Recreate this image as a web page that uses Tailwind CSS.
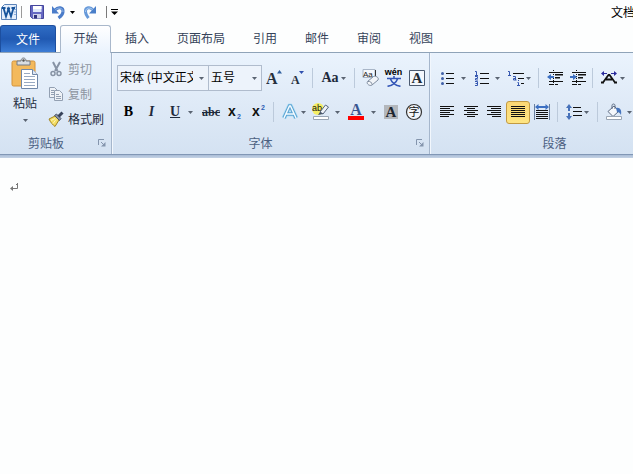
<!DOCTYPE html>
<html lang="zh-CN">
<head>
    <meta charset="UTF-8">
    <meta name="viewport" content="width=device-width, initial-scale=1.0">
    <title>文档 - Word</title>
    <script src="https://cdn.jsdelivr.net/npm/@tailwindcss/browser@4"></script>
    <style>
        body { font-family: 'Noto Sans CJK SC', sans-serif; }
    </style>
</head>
<body class="min-h-screen flex flex-col overflow-hidden bg-[#fdfefe] text-xs text-[#1e2a3c]">
    <!-- Shared shapes -->
    <svg class="hidden">
        <symbol id="arrow" viewBox="0 0 5 3"><path d="M0 0h5L2.5 3z" fill="#5a6472"/></symbol>
        <symbol id="launcher" viewBox="0 0 8 8">
            <path d="M.5 6V.5H6" fill="none" stroke="#8495ad"/>
            <path d="M3 3l3 3" stroke="#8495ad"/><path d="M7.500 3v4.500H3z" fill="#8495ad"/>
        </symbol>
    </svg>

    <!-- Title bar -->
    <header class="h-6 flex items-center shrink-0 pl-px whitespace-nowrap">
        <button aria-label="Word" class="w-4 h-4">
            <svg viewBox="0 0 16 16" class="w-4 h-4">
                <path d="M3.500.5h12v15H.5v-12z" fill="#e4eefb" stroke="#5b83b8"/>
                <path d="M13 3h2M13 5.500h2M13 8h2M13 10.500h2" stroke="#8fb2dd"/>
                <path d="M2.500 4L5 12.500 7.500 5 10 12.500 12.500 4M1 4h3.500M10.500 4H14M6 4.500h3" fill="none" stroke="#17549b" stroke-width="1.800"/>
            </svg>
        </button>
        <span class="w-px h-3 ml-1 mr-[7px] bg-[#9a9a9a]"></span>
        <button aria-label="保存" class="w-4 h-4">
            <svg viewBox="0 0 16 16" class="w-4 h-4">
                <path d="M1.500 1.500h13v13h-11l-2-2z" fill="#6568c2" stroke="#44469c"/>
                <path d="M4 2h8.500v6H4z" fill="#dfe8f9"/><path d="M4 2h8.500v3H4z" fill="#fff"/>
                <path d="M4 10h8v4.500H4z" fill="#cfd2ea"/><path d="M5 11h3v3.500H5z" fill="#30327d"/>
            </svg>
        </button>
        <button aria-label="撤消" class="ml-1.5 flex items-center gap-1">
            <svg viewBox="0 0 15 16" class="w-[15px] h-4">
                <path d="M4 6C7 2.500 12.500 3 12 8c-.3 3-2.500 4.500-4.500 6" fill="none" stroke="#4a7cc9" stroke-width="3"/>
                <path d="M4 6C7 3 12 3.500 12 8" fill="none" stroke="#8fb5e8"/>
                <path d="M1 2v7.500h7z" fill="#4a7cc9"/>
            </svg>
            <svg class="w-[5px] h-[3px] brightness-0"><use href="#arrow"/></svg>
        </button>
        <button aria-label="恢复" class="ml-2">
            <svg viewBox="0 0 15 16" class="block w-[15px] h-4">
                <path d="M10 6C7.500 2.500 2 3 2.500 8c.3 3 1.500 4 3 6" fill="none" stroke="#6699d9" stroke-width="3"/>
                <path d="M10 6C7.500 3 2.500 3.500 2.500 8" fill="none" stroke="#a9cbf2"/>
                <path d="M13 2v7.500H6z" fill="#4a7fc9"/>
            </svg>
        </button>
        <span class="w-px h-3 ml-2 mr-1 bg-[#7a7a7a]"></span>
        <button aria-label="自定义快速访问工具栏">
            <svg viewBox="0 0 7 6" class="block w-[7px] h-1.5"><path d="M0 0h7v1H0zM0 2.500h7L3.500 6z" fill="#000"/></svg>
        </button>
        <h1 class="ml-auto w-[22px] overflow-hidden text-black">文档</h1>
    </header>

    <!-- Tabs -->
    <nav class="h-[29px] flex items-end shrink-0 whitespace-nowrap border-b border-[#8fa3b8] text-[#35435a]">
        <button class="w-14 h-[27px] mr-1 pb-px rounded-t-[3px] border border-b-0 border-[#1d4f9f] bg-linear-to-b from-[#2f6cc4] via-[#2059b2] to-[#3c7dd6] text-white">文件</button>
        <button class="w-[51px] h-7 -mb-px pb-[3px] rounded-t-[3px] border border-b-0 border-[#a9b8cb] bg-linear-to-b from-white to-[#eaf3fd]">开始</button>
        <button class="h-[27px] px-3.5 pb-px">插入</button>
        <button class="h-[27px] px-3.5 pb-px">页面布局</button>
        <button class="h-[27px] px-3.5 pb-px">引用</button>
        <button class="h-[27px] px-3.5 pb-px">邮件</button>
        <button class="h-[27px] px-3.5 pb-px">审阅</button>
        <button class="h-[27px] px-3.5 pb-px">视图</button>
    </nav>

    <!-- Ribbon -->
    <div class="flex shrink-0 overflow-hidden whitespace-nowrap bg-linear-to-b from-[#eaf3fd] via-[#dfeaf7] to-[#d4e2f2] border-b border-[#8197b5]">
        <!-- Clipboard -->
        <section class="w-28 shrink-0 flex flex-col justify-between border-r border-[#a5b6cc] pt-[3px]">
            <div class="flex">
                <button class="w-12 flex flex-col items-center pt-px pl-0.5">
                    <svg viewBox="0 0 28 32" class="w-7 h-8">
                        <rect x="1" y="4" width="23" height="25" rx="1.500" fill="#f3b95c" stroke="#d3923a"/>
                        <path d="M6 8V4h4c0-4 5-4 5 0h4v4z" fill="#d9dde2" stroke="#727b86"/>
                        <circle cx="12.500" cy="3.500" r="1.200" fill="#555"/>
                        <path d="M10.500 12.500h11l5 5v14h-16z" fill="#fff" stroke="#7087a8"/>
                        <path d="M21.500 12.500v5h5" fill="#dfe8f4" stroke="#7087a8"/>
                        <path d="M13 16.500h6M13 19.500h11M13 22.500h11M13 25.500h11M13 28.500h11" stroke="#98a9c2"/>
                    </svg>
                    <span class="mt-1.5">粘贴</span>
                    <svg class="mt-2 w-[5px] h-[3px]"><use href="#arrow"/></svg>
                </button>
                <div class="flex flex-col">
                    <button class="h-[25px] flex items-center gap-1 text-[#8d959f]">
                        <svg viewBox="0 0 16 16" class="w-4 h-4" fill="none" stroke="#8793a5">
                            <path d="M5 1l4.500 9M12 1L7 10" stroke-width="2"/><circle cx="5" cy="12.500" r="2" stroke-width="1.500"/><circle cx="11" cy="12.500" r="2" stroke-width="1.500"/>
                        </svg>剪切
                    </button>
                    <button class="h-[25px] flex items-center gap-1 text-[#8d959f]">
                        <svg viewBox="0 0 16 16" class="w-4 h-4" fill="#eef2f7" stroke="#93a0b2">
                            <path d="M1.500 1.500h5l3 3v7h-8z"/><path d="M3 4.500h3M3 6.500h3M3 8.500h3"/>
                            <path d="M6.500 4.500h5l3 3v7h-8z"/><path d="M8 8.500h3M8 10.500h5M8 12.500h5"/>
                        </svg>复制
                    </button>
                    <button class="h-[25px] flex items-center gap-1">
                        <svg viewBox="0 0 16 16" class="w-4 h-4">
                            <path d="M1 8l6-3 4 4-4 6.500C5 14 2.500 11.500 1 8z" fill="#f3dc62" stroke="#a18424"/>
                            <path d="M3 9.500l4-2M5 12.500l3-4" stroke="#fdf5b5"/>
                            <path d="M6.500 4.500l2-1.500 4.500 4.500-1.500 2z" fill="#8a93a3" stroke="#4b566b"/>
                            <path d="M10.500 5.500L14.500 1.500" stroke="#37425a" stroke-width="3"/>
                        </svg>格式刷
                    </button>
                </div>
            </div>
            <div class="h-[22px] flex items-center pr-[5px]">
                <h2 class="grow pr-1.5 text-center text-[#4b6081]">剪贴板</h2>
                <button aria-label="剪贴板选项"><svg class="block w-2 h-2"><use href="#launcher"/></svg></button>
            </div>
        </section>

        <!-- Font -->
        <section class="w-[318px] shrink-0 flex flex-col border-l border-r border-l-[#f2f7fd] border-r-[#a5b6cc] pt-3 pl-1">
            <div class="h-[26px] flex items-center">
                <label class="relative w-[92px] h-[26px] flex items-center border border-[#b0bccd] bg-[#edf3fb]">
                    <select aria-label="字体" class="w-[75px] h-6 pl-0.5 pb-0.5 appearance-none overflow-hidden text-clip text-black outline-none"><option>宋体 (中文正文)</option></select>
                    <svg class="absolute right-1 w-[5px] h-[3px] pointer-events-none"><use href="#arrow"/></svg>
                </label>
                <label class="relative w-[54px] h-[26px] -ml-px flex items-center border border-[#b0bccd] bg-[#edf3fb]">
                    <select aria-label="字号" class="w-10 h-6 pl-0.5 pb-0.5 appearance-none text-black outline-none"><option>五号</option></select>
                    <svg class="absolute right-1 w-[5px] h-[3px] pointer-events-none"><use href="#arrow"/></svg>
                </label>
                <button aria-label="增大字体" class="w-6 flex justify-center">
                    <svg viewBox="0 0 16 16" class="w-4 h-4"><text x="0" y="14" font-family="Liberation Serif" font-weight="bold" font-size="16" fill="#26303d">A</text><path d="M11 3.500h5L13.500 0z" fill="#2f5f9e"/></svg>
                </button>
                <button aria-label="缩小字体" class="w-[23px] flex justify-center">
                    <svg viewBox="0 0 16 16" class="w-4 h-4"><text x="1" y="14" font-family="Liberation Serif" font-weight="bold" font-size="12" fill="#26303d">A</text><path d="M9 1h5l-2.500 3z" fill="#2f4fae"/></svg>
                </button>
                <span class="w-px h-5 ml-[3px] mr-1 bg-[#bccadb]"></span>
                <button aria-label="更改大小写" class="w-[33px] flex items-center justify-center gap-0.5 font-['Liberation_Serif'] font-bold text-sm">Aa<svg class="w-[5px] h-[3px]"><use href="#arrow"/></svg></button>
                <span class="w-px h-5 mx-1 bg-[#bccadb]"></span>
                <button aria-label="清除格式" class="w-[23px] flex justify-center">
                    <svg viewBox="0 0 18 18" class="w-[18px] h-[18px]">
                        <path d="M1 .5h12v8H1z" fill="#f5f8fc" stroke="#a9b6c8"/>
                        <text x="1" y="8" font-family="Liberation Sans" font-size="8" fill="#222">Aa</text>
                        <path d="M13.500 1v6" stroke="#333"/>
                        <path d="M5.500 12.500l6-5c2-1 6 1 4.500 3.500l-6 5c-2 1.500-6-1-4.500-3.500z" fill="#f1f4f8" stroke="#7f8c9f"/>
                        <path d="M6 12.500c2-.5 4 1 4 3" fill="none" stroke="#7f8c9f"/>
                    </svg>
                </button>
                <button aria-label="拼音指南" class="w-[23px] h-[18px] flex flex-col items-center text-[#3557b7]">
                    <span class="h-1.5 leading-[6px] text-[9px] font-bold text-black font-['Liberation_Sans']">wén</span>
                    <svg viewBox="0 0 14 11" class="w-3.5 h-[11px] mt-px" fill="none" stroke="currentColor" stroke-width="1.600"><path d="M0 2.500h14M7 0v2.500M3.500 3C5 7 8.500 9.500 13.500 10.300M10.500 3C9 7 5.500 9.500.5 10.300"/></svg>
                </button>
                <button aria-label="字符边框" class="w-[23px] flex justify-center">
                    <svg viewBox="0 0 16 16" class="w-4 h-4"><path d="M.5.5h15v15H.5z" fill="#f3f7fc" stroke="#4b5a70"/><text x="8" y="13" font-family="Liberation Serif" font-weight="bold" font-size="15" text-anchor="middle" fill="#222b36">A</text></svg>
                </button>
            </div>
            <div class="h-6 mt-[9px] flex items-center">
                <button class="w-[23px] font-['Liberation_Serif'] font-black text-sm text-black">B</button>
                <button class="w-[23px] font-['Liberation_Serif'] font-bold italic text-sm">I</button>
                <button aria-label="下划线" class="w-9 flex items-center pl-[7px] gap-2 font-['Liberation_Serif'] font-bold text-sm"><span class="underline">U</span><svg class="w-[5px] h-[3px]"><use href="#arrow"/></svg></button>
                <button class="w-6 font-['Liberation_Serif'] font-bold text-xs line-through">abc</button>
                <button aria-label="下标" class="w-6 flex justify-center">
                    <svg viewBox="0 0 14 16" class="w-3.5 h-4"><text x="0" y="12" font-family="Liberation Sans" font-weight="bold" font-size="14" fill="#111">x</text><text x="9" y="15" font-family="Liberation Sans" font-weight="bold" font-size="7" fill="#2f5fb5">2</text></svg>
                </button>
                <button aria-label="上标" class="w-[23px] flex justify-center">
                    <svg viewBox="0 0 14 16" class="w-3.5 h-4"><text x="0" y="12" font-family="Liberation Sans" font-weight="bold" font-size="14" fill="#111">x</text><text x="9" y="6" font-family="Liberation Sans" font-weight="bold" font-size="7" fill="#2f5fb5">2</text></svg>
                </button>
                <span class="w-px h-5 mx-[3px] bg-[#bccadb]"></span>
                <button aria-label="文本效果" class="w-8 flex items-center justify-center gap-0.5">
                    <svg viewBox="0 0 18 18" class="w-[18px] h-[18px]"><path d="M3 15L8.500 3h1L15 15M5 11h8" fill="none" stroke="#b5e0f6" stroke-width="5" stroke-linejoin="round"/><path d="M3 15L8.500 3h1L15 15M5 11h8" fill="none" stroke="#5ba3d3" stroke-width="3.500"/><path d="M3 15L8.500 3h1L15 15M5 11h8" fill="none" stroke="#f4fbff" stroke-width="1.500"/></svg>
                    <svg class="w-[5px] h-[3px]"><use href="#arrow"/></svg>
                </button>
                <button aria-label="突出显示" class="w-[34px] flex items-center justify-center gap-[5px]">
                    <svg viewBox="0 0 18 18" class="w-[18px] h-[18px]">
                        <circle cx="6" cy="6" r="6" fill="#f5ee63"/>
                        <text x="0" y="8" font-family="Liberation Sans" font-size="9" fill="#111">ab</text>
                        <path d="M8 9l5.500-7 3 2-5.500 7z" fill="#eef2f8" stroke="#56657c"/><path d="M6 12l2-3 3 2z" fill="#43506a"/>
                        <path d="M1.500 13.500h15v3h-15z" fill="#fff" stroke="#9aa6b5"/>
                    </svg>
                    <svg class="w-[5px] h-[3px]"><use href="#arrow"/></svg>
                </button>
                <button aria-label="字体颜色" class="w-9 flex items-center justify-center gap-1.5">
                    <svg viewBox="0 0 18 18" class="w-[18px] h-[18px]"><text x="9" y="12" font-family="Liberation Serif" font-weight="bold" font-size="16" text-anchor="middle" fill="#3a5591">A</text><path d="M1 13h16v4H1z" fill="#f00"/></svg>
                    <svg class="w-[5px] h-[3px]"><use href="#arrow"/></svg>
                </button>
                <button aria-label="字符底纹" class="w-[23px] flex justify-center">
                    <svg viewBox="0 0 14 14" class="w-3.5 h-3.5"><path d="M0 0h14v14H0z" fill="#b3b7bc"/><text x="7" y="12" font-family="Liberation Serif" font-weight="bold" font-size="15" text-anchor="middle" fill="#1d252f">A</text></svg>
                </button>
                <button aria-label="带圈字符" class="w-[23px] flex justify-center">
                    <svg viewBox="0 0 18 18" class="w-[18px] h-[18px]"><circle cx="9" cy="9" r="7.500" fill="#f2f6fb" stroke="#333" stroke-width="1.200"/><text x="9" y="13" font-family="Noto Sans CJK SC" font-size="11" text-anchor="middle" fill="#111">字</text></svg>
                </button>
            </div>
            <div class="h-[22px] mt-2 flex items-center pr-[5px]">
                <h2 class="grow pr-3 text-center text-[#4b6081]">字体</h2>
                <button aria-label="字体选项"><svg class="block w-2 h-2"><use href="#launcher"/></svg></button>
            </div>
        </section>

        <!-- Paragraph -->
        <section class="w-[250px] shrink-0 flex flex-col border-l border-[#f2f7fd] pt-3 pl-1">
            <div class="h-[26px] flex items-center">
                <button aria-label="项目符号" class="w-[35px] flex items-center justify-center gap-1.5">
                    <svg viewBox="0 0 15 16" class="w-[15px] h-4"><path d="M6 3.500h8M6 8.500h8M6 13.500h8" stroke="#111"/><g fill="#4060a8"><circle cx="2.500" cy="3.500" r="1.500"/><circle cx="2.500" cy="8.500" r="1.500"/><circle cx="2.500" cy="13.500" r="1.500"/></g></svg>
                    <svg class="w-[5px] h-[3px]"><use href="#arrow"/></svg>
                </button>
                <button aria-label="编号" class="w-[34px] flex items-center justify-center gap-1.5">
                    <svg viewBox="0 0 15 16" class="w-[15px] h-4"><path d="M6 3.500h9M6 8.500h9M6 13.500h9" stroke="#111"/><path d="M1 1.500h1.500V5M1 5.500h3M1 6.500h2.500v2H1.500V10H4M1 11.500h2.500v4H1M1.500 13.500h2" fill="none" stroke="#3557b0"/></svg>
                    <svg class="w-[5px] h-[3px]"><use href="#arrow"/></svg>
                </button>
                <button aria-label="多级列表" class="w-[30px] flex items-center justify-center gap-px">
                    <svg viewBox="0 0 17 16" class="w-[17px] h-4"><path d="M5 3.500h11M10 8.500h6M13 13.500h3" stroke="#111"/><path d="M0 1.500h1.500V5M0 5.500h3M5 6.500h2.500V10M7.500 8.500h-2v1.500h3M9.500 12.500h1V15M9 15.500h3M10 10.500h1" fill="none" stroke="#3557b0"/></svg>
                    <svg class="w-[5px] h-[3px]"><use href="#arrow"/></svg>
                </button>
                <span class="w-px h-5 mx-1 bg-[#bccadb]"></span>
                <button aria-label="减少缩进量" class="w-[23px] flex justify-center">
                    <svg viewBox="0 0 16 16" class="w-4 h-4"><path d="M2 2.500h14M8 5h8M8 8h5M2 11.500h14M2 14.500h4M8 14.500h3" stroke="#111"/><path d="M8 4.500h8M8 7.500h5" stroke="#111"/><path d="M6.500 0v16" stroke="#111" stroke-dasharray="1 1"/><path d="M0 7l4-3v2h3v2H4v2z" fill="#3c6fc2"/></svg>
                </button>
                <button aria-label="增加缩进量" class="w-[23px] flex justify-center">
                    <svg viewBox="0 0 16 16" class="w-4 h-4"><path d="M2 2.500h14M8 5h8M8 8h5M2 11.500h14M2 14.500h4M8 14.500h3" stroke="#111"/><path d="M8 4.500h8M8 7.500h5" stroke="#111"/><path d="M6.500 0v16" stroke="#111" stroke-dasharray="1 1"/><path d="M7 7L3 4v2H0v2h3v2z" fill="#3c6fc2"/></svg>
                </button>
                <span class="w-px h-5 mx-[3px] bg-[#bccadb]"></span>
                <button aria-label="中文版式" class="w-8 flex items-center justify-center gap-0.5">
                    <svg viewBox="0 0 18 16" class="w-[18px] h-4"><path d="M1 12.500h3M14 12.500h3M3 12.500L8.500 5h1L15 12.500M6 9.500h6" fill="none" stroke="#111" stroke-width="1.800"/><path d="M1 3.500l3-2.500v2h3v1H4v2zM17 3.500L14 1v2h-3v1h3v2z" fill="#2a2a9c"/></svg>
                    <svg class="w-[5px] h-[3px]"><use href="#arrow"/></svg>
                </button>
            </div>
            <div class="h-6 mt-[9px] flex items-center">
                <button aria-label="左对齐" class="w-6 flex justify-center"><svg viewBox="0 0 14 12" class="w-3.5 h-3"><path d="M0 .5h14M0 2.500h10M0 4.500h14M0 6.500h10M0 8.500h14M0 10.500h9" stroke="#111"/></svg></button>
                <button aria-label="居中" class="w-[23px] flex justify-center"><svg viewBox="0 0 14 12" class="w-3.5 h-3"><path d="M0 .5h14M3 2.500h8M0 4.500h14M3 6.500h8M0 8.500h14M3 10.500h8" stroke="#111"/></svg></button>
                <button aria-label="右对齐" class="w-6 flex justify-center"><svg viewBox="0 0 14 12" class="w-3.5 h-3"><path d="M0 .5h14M4 2.500h10M0 4.500h14M4 6.500h10M0 8.500h14M5 10.500h9" stroke="#111"/></svg></button>
                <button aria-label="两端对齐" class="w-6 h-[23px] flex items-center justify-center rounded-[3px] border border-[#c29a42] bg-linear-to-b from-[#fbd774] to-[#fee583]"><svg viewBox="0 0 14 12" class="w-3.5 h-3"><path d="M0 .5h14M0 2.500h14M0 4.500h14M0 6.500h14M0 8.500h14M0 10.500h14" stroke="#111"/></svg></button>
                <button aria-label="分散对齐" class="w-[23px] flex justify-center"><svg viewBox="0 0 16 16" class="w-4 h-4"><path d="M.5 0v16M15.500 0v16" stroke="#6a7f9e"/><path d="M2 6.500h12M2 8.500h12M2 10.500h12M2 12.500h12M2 14.500h12" stroke="#111"/><path d="M1 3l3.500-3v2h7V0L15 3l-3.500 3V4h-7v2z" fill="#3c6fc2"/></svg></button>
                <span class="w-px h-5 ml-1 mr-[3px] bg-[#bccadb]"></span>
                <button aria-label="行距" class="w-8 flex items-center justify-center gap-0.5">
                    <svg viewBox="0 0 16 16" class="w-4 h-4"><path d="M7 3.500h8M7 7.500h9M7 11.500h9" stroke="#111"/><path d="M3 0l3 4H4v3H2V4H0zM3 16l3-4H4V9H2v3H0z" fill="#4671b9"/></svg>
                    <svg class="w-[5px] h-[3px]"><use href="#arrow"/></svg>
                </button>
                <span class="w-px h-5 ml-1 mr-[3px] bg-[#bccadb]"></span>
                <button aria-label="底纹" class="w-[34px] flex items-center justify-center gap-1">
                    <svg viewBox="0 0 18 18" class="w-[18px] h-[18px]">
                        <path d="M3 8.500L9 3l5 5-6 5.500z" fill="#f5f8fc" stroke="#5c6b82"/><path d="M7 6V2.500C7 .5 10 .5 10 2.500V6" fill="none" stroke="#5c6b82"/>
                        <path d="M11 5c4-1 6 2 5 7-1-2-2-3-4-3z" fill="#4574bd"/>
                        <path d="M1.500 13.500h15v3h-15z" fill="#fff" stroke="#9aa6b5"/>
                    </svg>
                    <svg class="w-[5px] h-[3px]"><use href="#arrow"/></svg>
                </button>
            </div>
            <h2 class="h-[22px] mt-2 pr-1.5 flex items-center justify-center text-[#4b6081]">段落</h2>
        </section>
    </div>
    <div class="h-[3px] shrink-0 bg-linear-to-b from-[#a9bcd6] to-[#c5d3e5]"></div>

    <!-- Document -->
    <main class="grow px-2.5 pt-[25px]">
        <svg viewBox="0 0 8 9" class="w-2 h-[9px]" role="img" aria-label="段落标记"><path d="M7.500 0v5.500H2M6 1.500h1" fill="none" stroke="#777"/><path d="M0 5.500L3 3v5z" fill="#777"/></svg>
    </main>
</body>
</html>
